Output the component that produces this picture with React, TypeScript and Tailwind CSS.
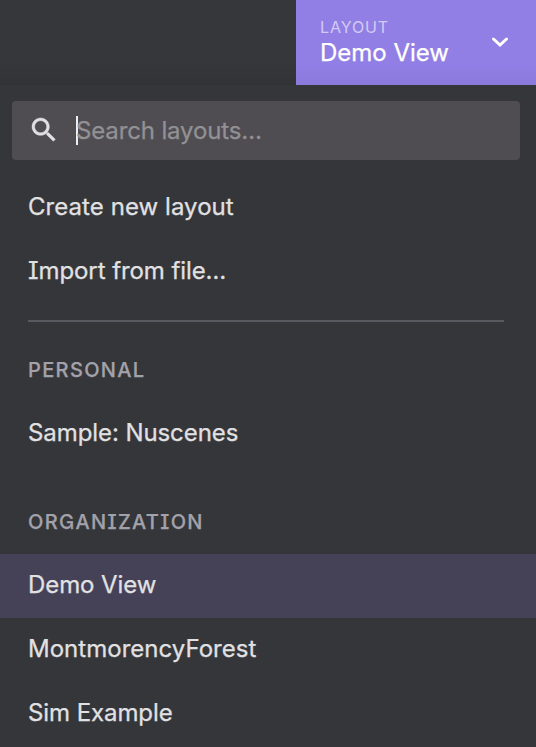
import React from "react";

interface MenuItemProps {
  label: string;
  selected?: boolean;
  tracking?: string;
}

function MenuItem({ label, selected = false, tracking = "tracking-[-0.08px]" }: MenuItemProps) {
  return (
    <li
      className={
        selected
          ? "flex h-16 items-center bg-[#454257] px-7 pb-[2px]"
          : "flex h-16 items-center px-7 pb-[2px]"
      }
    >
      <span className={`whitespace-nowrap ${tracking}`}>{label}</span>
    </li>
  );
}

function SectionHeader({ label }: { label: string }) {
  return (
    <h2 className="flex h-16 items-center px-7 text-[20px] font-medium tracking-[1.35px] text-[#a3a2ab]">
      {label}
    </h2>
  );
}

export default function App() {
  return (
    <div className="flex h-[747px] w-[536px] flex-col overflow-hidden bg-[#353639] font-['Inter',sans-serif] text-[24px] leading-[32px] tracking-[-0.08px] text-[#e1e1e3] [-webkit-text-stroke:0.25px] [font-feature-settings:'cv08','cv10']">
      <header className="flex h-[85px] shrink-0 justify-end bg-linear-to-b from-[#36373a] from-75% to-[#323336]">
        <button className="flex w-60 items-center justify-between bg-linear-to-b from-[#927fe6] from-75% to-[#8b79db] pr-6 pb-px pl-6 text-left text-white">
          <span className="flex flex-col">
            <span className="text-[16px] leading-[20px] tracking-[0.9px] text-[#d3cbf5] [-webkit-text-stroke:0]">LAYOUT</span>
            <span className="leading-[31px] tracking-[-0.02px]">Demo View</span>
          </span>
          <svg className="size-6" viewBox="0 0 24 24" fill="none" stroke="white" strokeWidth="3">
            <path d="M5.5 9 12 15 18.5 9" strokeLinecap="round" />
          </svg>
        </button>
      </header>
      <main className="flex flex-col">
        <div className="mr-4 ml-3 mt-4 flex h-[59px] items-center rounded bg-[#4f4d52] pl-4">
          <svg className="mb-px size-8" viewBox="0 0 24 24" fill="#e1e1e3" stroke="#e1e1e3" strokeWidth="0.35">
            <path d="M15.5 14h-.79l-.28-.27C15.41 12.59 16 11.11 16 9.5 16 5.91 13.09 3 9.5 3S3 5.91 3 9.5 5.91 16 9.5 16c1.61 0 3.09-.59 4.23-1.57l.27.28v.79l5 4.99L20.49 19zm-6 0C7.01 14 5 11.99 5 9.5S7.01 5 9.5 5 14 7.01 14 9.5 11.99 14 9.5 14" />
          </svg>
          <span className="ml-4 h-[29px] w-[2px] bg-[#eeeef0]" />
          <span className="-ml-[2px] tracking-[-0.14px] text-[#929194]">Search layouts…</span>
        </div>
        <ul className="mt-4">
          <MenuItem label="Create new layout" tracking="tracking-[0.06px]" />
          <MenuItem label="Import from file…" />
        </ul>
        <hr className="mr-8 ml-7 mt-4 h-[2px] border-0 bg-[#5a5961]" />
        <section className="mt-4">
          <SectionHeader label="PERSONAL" />
          <ul>
            <MenuItem label="Sample: Nuscenes" />
          </ul>
        </section>
        <section className="mt-6">
          <SectionHeader label="ORGANIZATION" />
          <ul>
            <MenuItem label="Demo View" selected />
            <MenuItem label="MontmorencyForest" tracking="tracking-[0.02px]" />
            <MenuItem label="Sim Example" />
          </ul>
        </section>
      </main>
    </div>
  );
}
